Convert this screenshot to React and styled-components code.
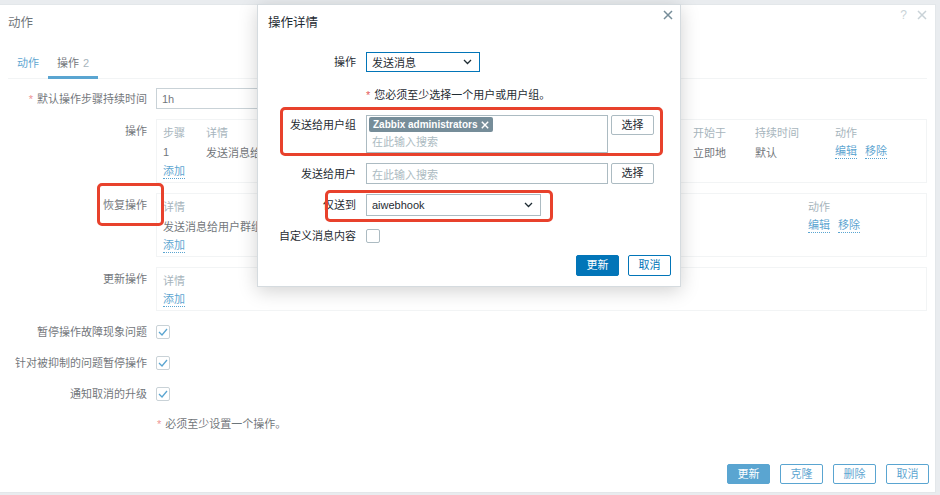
import React from 'react';
import styled, { createGlobalStyle } from 'styled-components';

const FONT = `"Liberation Sans", Arial, "Noto Sans CJK SC", sans-serif`;
const BLUE = '#0275b8';
const TEXT = '#1f2c33';
const GREY = '#768d99';
const LINE = '#acbbc2';
const RED = '#e8412c';

const Global = createGlobalStyle`
  html, body { margin: 0; padding: 0; }
  body {
    font-family: ${FONT};
    font-size: 11px;
    color: ${TEXT};
    background: #dde2e6;
    width: 940px;
    height: 495px;
    overflow: hidden;
  }
  * { box-sizing: border-box; }
`;

const Page = styled.div`
  position: relative;
  width: 940px;
  height: 495px;
  padding: 4px 4px 2px 0;
`;

const Dialog = styled.div`
  width: 936px;
  height: 489px;
  background: #fff;
  border: 1px solid #d5dbdf;
  border-left: none;
  display: flex;
  flex-direction: column;
`;

const Header = styled.div`
  position: relative;
  height: 35px;
  display: flex;
  align-items: center;
  padding: 0 ${p => p.$pad || 8}px;
  font-size: 12.5px;
  line-height: 16px;
  color: ${TEXT};
`;

const HeaderTools = styled.div`
  position: absolute;
  right: ${p => p.$right}px;
  top: ${p => p.$top}px;
  display: flex;
  align-items: center;
  gap: 10px;
  color: ${LINE};
  font-size: 12px;
`;

const Tabs = styled.div`
  margin: 15px 8px 0;
  display: flex;
  border-bottom: 1px solid #ebeef0;
`;

const Tab = styled.div`
  height: 24px;
  padding: 0 9px;
  line-height: 16px;
  color: ${p => (p.$active ? TEXT : BLUE)};
  border-bottom: 3px solid ${p => (p.$active ? BLUE : 'transparent')};
  margin-bottom: -1px;
`;

const Count = styled.span`
  color: ${GREY};
  margin-left: 4px;
`;

const Form = styled.div`
  margin-top: 9px;
  padding: 0 8px;
  display: grid;
  grid-template-columns: 139px 1fr;
  column-gap: 9px;
  row-gap: 10px;
`;

const Label = styled.div`
  text-align: right;
  line-height: ${p => p.$lh || 18}px;
  padding-top: ${p => p.$top || 0}px;
  white-space: nowrap;
  align-self: ${p => (p.$center ? 'center' : 'start')};
`;

const Req = styled.span`
  color: #e45959;
  margin-right: 4px;
`;

const TextInput = styled.div`
  width: ${p => p.$w}px;
  height: ${p => p.$h || 21}px;
  border: 1px solid ${LINE};
  background: #fff;
  padding: 0 5px;
  display: flex;
  align-items: center;
  color: ${p => (p.$ph ? LINE : TEXT)};
  white-space: nowrap;
`;

const Box = styled.div`
  border: 1px solid #ebeef0;
  padding: 2px 5px 0 6px;
  width: 771px;
`;

const TRow = styled.div`
  display: grid;
  grid-template-columns: ${p => p.$cols};
  height: 20px;
  align-items: center;
  white-space: nowrap;
  color: ${p => (p.$head ? GREY : TEXT)};
`;

const Cell = styled.div`
  overflow: hidden;
  display: flex;
  gap: 8px;
`;

const Link = styled.span`
  color: ${BLUE};
  border-bottom: 1px dotted ${BLUE};
  line-height: 13px;
  cursor: pointer;
`;

const CheckRow = styled.div`
  height: 21px;
  display: flex;
  align-items: center;
`;

const Check = styled.div`
  width: 14px;
  height: 14px;
  border: 1px solid ${LINE};
  border-radius: 2px;
  background: #fff;
  display: flex;
  align-items: center;
  justify-content: center;
`;

const Hint = styled.div`
  line-height: 20px;
  padding-left: 1px;
`;

const Footer = styled.div`
  margin-top: auto;
  display: flex;
  justify-content: flex-end;
  gap: ${p => p.$gap || 10}px;
  padding: 0 ${p => p.$right || 6}px ${p => p.$bottom || 8}px 0;
`;

const Button = styled.div`
  width: ${p => p.$w || 43}px;
  height: ${p => p.$h || 20}px;
  border: 1px solid ${p => (p.$grey ? LINE : BLUE)};
  border-radius: 2px;
  background: ${p => (p.$primary ? BLUE : '#fff')};
  color: ${p => (p.$primary ? '#fff' : p.$grey ? TEXT : BLUE)};
  display: flex;
  align-items: center;
  justify-content: center;
  line-height: 1;
`;

const Overlay = styled.div`
  position: absolute;
  inset: 0;
  background: rgba(255, 255, 255, 0.35);
`;

const Modal = styled.div`
  position: absolute;
  left: 257px;
  top: 4px;
  width: 424px;
  height: 283px;
  background: #fff;
  border: 1px solid #d5dbdf;
  box-shadow: 0 4px 18px rgba(0, 0, 0, 0.18);
  display: flex;
  flex-direction: column;
`;

const MForm = styled.div`
  padding: 12px 10px 0;
  display: grid;
  grid-template-columns: 88px 1fr;
  column-gap: 10px;
  row-gap: 10px;
`;

const Field = styled.div`
  display: flex;
  align-items: ${p => p.$align || 'center'};
  gap: 3px;
  min-height: ${p => p.$h || 0}px;
`;

const Select = styled.div`
  width: ${p => p.$w}px;
  height: ${p => p.$h || 21}px;
  border: 1px solid ${p => (p.$focus ? BLUE : LINE)};
  background: #fff;
  padding: 0 7px 0 5px;
  display: flex;
  align-items: center;
  justify-content: space-between;
  color: ${TEXT};
`;

const Multi = styled.div`
  width: 242px;
  height: 38px;
  border: 1px solid ${LINE};
  padding: 1px 2px;
  display: flex;
  flex-direction: column;
  gap: 3px;
`;

const Tag = styled.div`
  align-self: flex-start;
  height: 15px;
  line-height: 15px;
  background: ${GREY};
  color: #fff;
  border-radius: 2px;
  padding: 0 4px;
  display: flex;
  align-items: center;
  gap: 4px;
  font-size: 10px;
  font-weight: bold;
  white-space: nowrap;
`;

const Placeholder = styled.div`
  color: ${LINE};
  padding-left: 3px;
  line-height: 14px;
`;

const Annot = styled.div`
  position: absolute;
  left: ${p => p.$x}px;
  top: ${p => p.$y}px;
  width: ${p => p.$w}px;
  height: ${p => p.$h}px;
  border: 3px solid ${RED};
  border-radius: 5px;
`;

const Chevron = () => (
  <svg width="9" height="6" viewBox="0 0 9 6">
    <path d="M1 1l3.5 3.5L8 1" fill="none" stroke={TEXT} strokeWidth="1.3" />
  </svg>
);

const Cross = ({ size = 10, color = GREY, w = 1.5 }) => (
  <svg width={size} height={size} viewBox="0 0 10 10">
    <path d="M1 1l8 8M9 1l-8 8" stroke={color} strokeWidth={w} fill="none" />
  </svg>
);

const Tick = () => (
  <svg width="10" height="8" viewBox="0 0 10 8">
    <path d="M1 4l3 3 5-6" fill="none" stroke={BLUE} strokeWidth="1.3" />
  </svg>
);

const OPS_COLS = '43px 487px 62px 80px 1fr';
const REC_COLS = '645px 1fr';

export default function App() {
  return (
    <Page>
      <Global />
      <Dialog>
        <Header>
          动作
          <HeaderTools $right={8} $top={2}>
            <span>?</span>
            <Cross color={LINE} />
          </HeaderTools>
        </Header>
        <Tabs>
          <Tab>动作</Tab>
          <Tab $active>
            操作<Count>2</Count>
          </Tab>
        </Tabs>
        <Form>
          <Label $center>
            <Req>*</Req>默认操作步骤持续时间
          </Label>
          <TextInput $w={260} $h={21}>1h</TextInput>

          <Label $top={3}>操作</Label>
          <Box>
            <TRow $cols={OPS_COLS} $head>
              <Cell>步骤</Cell>
              <Cell>详情</Cell>
              <Cell>开始于</Cell>
              <Cell>持续时间</Cell>
              <Cell>动作</Cell>
            </TRow>
            <TRow $cols={OPS_COLS}>
              <Cell>1</Cell>
              <Cell>发送消息给用户群组: Zabbix administrators 通过 aiwebhook</Cell>
              <Cell>立即地</Cell>
              <Cell>默认</Cell>
              <Cell>
                <Link>编辑</Link>
                <Link>移除</Link>
              </Cell>
            </TRow>
            <TRow $cols="1fr">
              <Cell>
                <Link>添加</Link>
              </Cell>
            </TRow>
          </Box>

          <Label $top={3}>恢复操作</Label>
          <Box>
            <TRow $cols={REC_COLS} $head>
              <Cell>详情</Cell>
              <Cell>动作</Cell>
            </TRow>
            <TRow $cols={REC_COLS}>
              <Cell>发送消息给用户群组: Zabbix administrators 通过 aiwebhook</Cell>
              <Cell>
                <Link>编辑</Link>
                <Link>移除</Link>
              </Cell>
            </TRow>
            <TRow $cols="1fr">
              <Cell>
                <Link>添加</Link>
              </Cell>
            </TRow>
          </Box>

          <Label $top={3}>更新操作</Label>
          <Box>
            <TRow $cols="1fr" $head>
              <Cell>详情</Cell>
            </TRow>
            <TRow $cols="1fr">
              <Cell>
                <Link>添加</Link>
              </Cell>
            </TRow>
          </Box>

          <Label $center>暂停操作故障现象问题</Label>
          <CheckRow>
            <Check>
              <Tick />
            </Check>
          </CheckRow>

          <Label $center>针对被抑制的问题暂停操作</Label>
          <CheckRow>
            <Check>
              <Tick />
            </Check>
          </CheckRow>

          <Label $center>通知取消的升级</Label>
          <CheckRow>
            <Check>
              <Tick />
            </Check>
          </CheckRow>

          <div />
          <Hint>
            <Req>*</Req>必须至少设置一个操作。
          </Hint>
        </Form>
        <Footer $right={6} $bottom={8}>
          <Button $primary>更新</Button>
          <Button>克隆</Button>
          <Button>删除</Button>
          <Button>取消</Button>
        </Footer>
      </Dialog>

      <Overlay />

      <Modal>
        <Header $pad={10}>
          操作详情
          <HeaderTools $right={7} $top={5}>
            <Cross />
          </HeaderTools>
        </Header>
        <MForm>
          <Label $center>操作</Label>
          <Field>
            <Select $w={114} $h={20} $focus>
              发送消息
              <Chevron />
            </Select>
          </Field>

          <div />
          <Field $h={23}>
            <span>
              <Req>*</Req>您必须至少选择一个用户或用户组。
            </span>
          </Field>

          <Label $top={1}>发送给用户组</Label>
          <Field $align="flex-start">
            <Multi>
              <Tag>
                Zabbix administrators
                <Cross size={8} color="#fff" w={1.8} />
              </Tag>
              <Placeholder>在此输入搜索</Placeholder>
            </Multi>
            <Button $grey $h={20}>选择</Button>
          </Field>

          <Label $center>发送给用户</Label>
          <Field>
            <TextInput $w={242} $ph>在此输入搜索</TextInput>
            <Button $grey $h={21}>选择</Button>
          </Field>

          <Label $center>仅送到</Label>
          <Field>
            <Select $w={175} $h={22}>
              aiwebhook
              <Chevron />
            </Select>
          </Field>

          <Label $center>自定义消息内容</Label>
          <Field $h={20}>
            <Check />
          </Field>
        </MForm>
        <Footer $right={9} $bottom={10} $gap={9}>
          <Button $primary $h={21}>更新</Button>
          <Button $h={21}>取消</Button>
        </Footer>
      </Modal>

      <Annot $x={97} $y={183} $w={67} $h={43} />
      <Annot $x={280} $y={107} $w={383} $h={49} />
      <Annot $x={325} $y={190} $w={228} $h={32} />
    </Page>
  );
}
